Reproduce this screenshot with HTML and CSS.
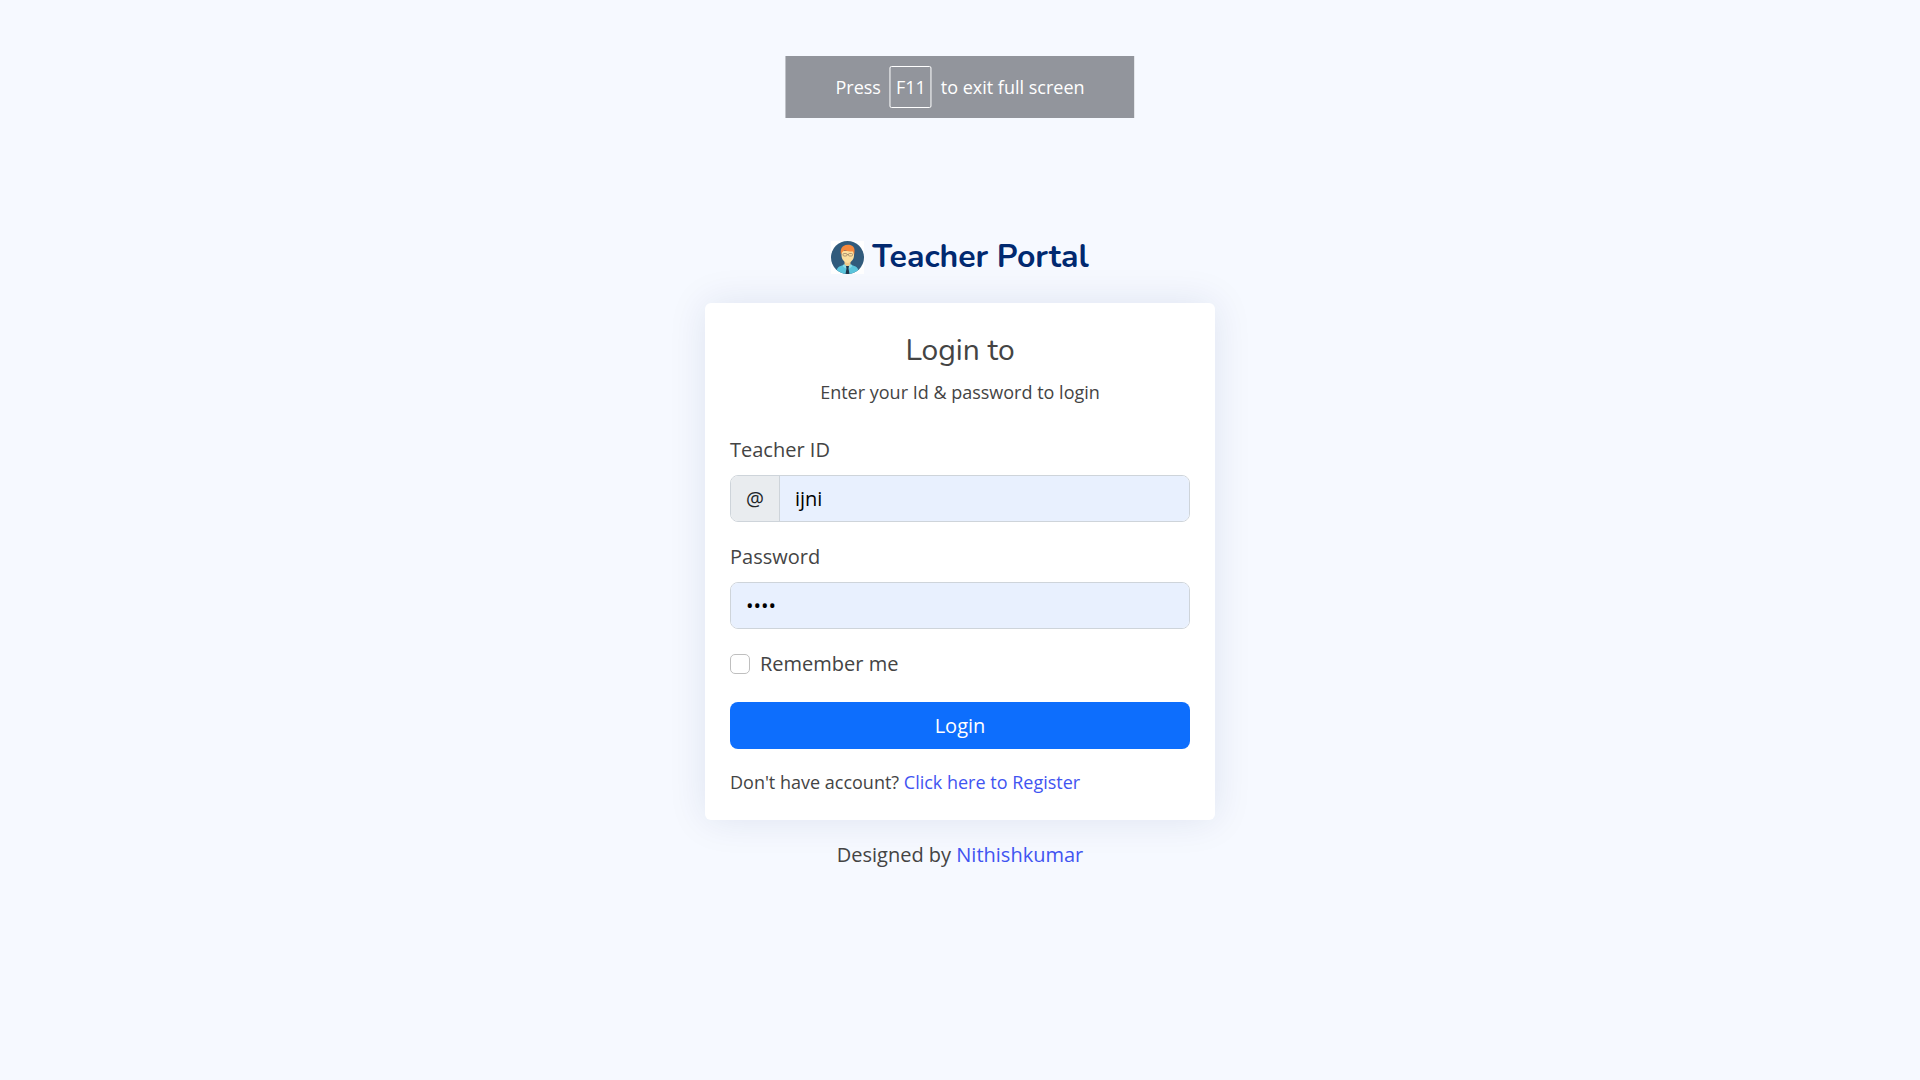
FILE: index.html
```html
<!DOCTYPE html>
<html lang="en">
<head>
  <meta charset="utf-8">
  <meta name="viewport" content="width=device-width, initial-scale=1">
  <title>Teacher Portal</title>
  <link rel="stylesheet" href="styles.css">
</head>
<body>
  <div class="fullscreen-hint">Press <kbd class="key">F11</kbd> to exit full screen</div>

  <main class="page">
    <a class="brand" href="#">
      <svg class="brand-logo" viewBox="0 0 66 66" aria-hidden="true">
        <defs><clipPath id="disc"><circle cx="33" cy="33" r="33"/></clipPath></defs>
        <rect width="66" height="66" fill="#fff"/>
        <g clip-path="url(#disc)">
          <rect width="66" height="66" fill="#315b7c"/>
          <path d="M10 66c0-10 4-15 12-17l11-3 11 3c8 2 12 7 12 17z" fill="#5bc5dc"/>
          <path d="M27 38h12v9l-6 6-6-6z" fill="#f0ca8a"/>
          <path d="M26 46l7 6 7-6 3 4-6 5-4-4-4 4-6-5z" fill="#8adbe8"/>
          <path d="M30 50h6l-1 5 2 11h-8l2-11z" fill="#20364b"/>
          <path d="M21 20h25v9c0 7-6 15-12.500 15S21 36 21 29z" fill="#fbdf9f"/>
          <path d="M20 28c-1-8-1-14 5-18 8-5 22-2 22 8 0 4 0 7-1 10l-2-7c-7 0-13-1-17-2-4 2-6 4-7 9z" fill="#f6893d"/>
          <g fill="none" stroke="#9b8264" stroke-width="1.500"><rect x="24" y="25" width="8" height="5" rx="2"/><rect x="35" y="25" width="8" height="5" rx="2"/><path d="M32 27h3"/></g>
        </g>
      </svg>
      <span class="brand-name">Teacher Portal</span>
    </a>

    <section class="card">
      <header class="card-header">
        <h1 class="card-title">Login to</h1>
        <p class="card-subtitle">Enter your Id &amp; password to login</p>
      </header>
      <form class="login-form">
        <div class="field">
          <label for="teacher-id">Teacher ID</label>
          <div class="input-group">
            <span class="input-prefix">@</span>
            <input class="input" id="teacher-id" type="text" value="ijni">
          </div>
        </div>
        <div class="field">
          <label for="password">Password</label>
          <div class="input-group">
            <input class="input" id="password" type="password" value="ijni">
          </div>
        </div>
        <div class="check">
          <input class="checkbox" id="remember" type="checkbox">
          <label for="remember">Remember me</label>
        </div>
        <button class="button" type="button">Login</button>
        <p class="register">Don't have account? <a href="#">Click here to Register</a></p>
      </form>
    </section>

    <footer class="credits">Designed by <a href="#">Nithishkumar</a></footer>
  </main>
</body>
</html>
```
FILE: styles.css
```css
* {
  box-sizing: border-box;
}

body {
  margin: 0;
  background: #f6f9ff;
  color: #444;
  font: 20px/30px "Open Sans", sans-serif;
}

a {
  color: #4154f1;
  text-decoration: none;
}

h1,
p {
  margin: 0;
}

.fullscreen-hint {
  position: fixed;
  top: 56px;
  left: 50%;
  transform: translateX(-50%);
  display: flex;
  align-items: center;
  gap: 9px;
  padding: 10px 50px;
  background: #92959c;
  color: #fff;
  font-size: 18px;
  line-height: 26px;
  white-space: nowrap;
}

.key {
  padding: 7px 5px;
  border: 1px solid #fff;
  border-radius: 2px;
  font: inherit;
}

.page {
  display: flex;
  flex-direction: column;
  align-items: center;
  justify-content: center;
  min-height: 100vh;
  padding: 40px 16px 13px;
}

.brand {
  display: flex;
  align-items: center;
  gap: 8px;
  margin-bottom: 26px;
}

.brand-logo {
  width: 33px;
  height: 33px;
}

.brand-name {
  color: #012970;
  font: 700 32px/40px Nunito, Lato, sans-serif;
}

.card {
  width: 100%;
  max-width: 510px;
  padding: 25px;
  border-radius: 6px;
  background: #fff;
  box-shadow: 0 0 38px rgba(1, 41, 112, 0.1);
}

.card-header {
  margin-bottom: 30px;
  text-align: center;
}

.card-title {
  font: 400 30px/46px Nunito, Lato, sans-serif;
}

.card-subtitle,
.register {
  font-size: 18px;
  line-height: 26px;
}

.card-subtitle {
  margin-top: 5px;
}

.login-form {
  display: flex;
  flex-direction: column;
  gap: 20px;
}

.field {
  display: flex;
  flex-direction: column;
  gap: 10px;
}

.input-group {
  display: flex;
  height: 47px;
  overflow: hidden;
  border: 1px solid #ced4da;
  border-radius: 8px;
}

.input-prefix {
  padding: 8px 15px;
  border-right: 1px solid #ced4da;
  background: #e9ecef;
  color: #212529;
}

.input {
  flex: 1;
  min-width: 0;
  padding: 0 15px;
  border: 0;
  background: #e8f0fe;
  color: #000;
  font: inherit;
}

.check {
  display: flex;
  align-items: center;
  gap: 10px;
  margin-bottom: 3px;
}

.checkbox {
  width: 20px;
  height: 20px;
  margin: 0;
  border: 1px solid #bfbfbf;
  border-radius: 5px;
  background: #fff;
  appearance: none;
}

.button {
  height: 47px;
  border: 0;
  border-radius: 8px;
  background: #0d6efd;
  color: #fff;
  font: inherit;
}

.credits {
  margin-top: 20px;
}
```
